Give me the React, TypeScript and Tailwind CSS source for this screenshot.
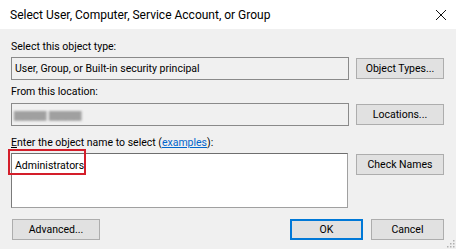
import React from "react";

const font = { fontFamily: 'Roboto, "Noto Sans", Arial, sans-serif' };

function Btn({ children, primary = false, className = "" }: { children: React.ReactNode; primary?: boolean; className?: string }) {
  return (
    <div
      className={`flex items-center justify-center bg-[#e1e1e1] text-[10.5px] text-black ${
        primary ? "border-2 border-[#0078d7]" : "border border-[#adadad]"
      } ${className}`}
    >
      {children}
    </div>
  );
}

export default function App() {
  return (
    <div className="relative w-[456px] h-[249px] overflow-hidden bg-[#f0f0f0] text-[10.5px] text-black" style={font}>
      {/* Title bar */}
      <div className="flex h-[29px] items-center justify-between bg-white pl-[10px] pr-[9px]">
        <span className="text-[12px] leading-none">Select User, Computer, Service Account, or Group</span>
        <svg width="12" height="12" viewBox="0 0 12 12">
          <path d="M1 1 L11 11 M11 1 L1 11" stroke="#111" strokeWidth="1" />
        </svg>
      </div>

      <div className="flex flex-col pl-[11px] pr-[12px]">
        <div className="mt-[10px] h-[16px] leading-[16px]">Select this object type:</div>
        <div className="mt-[2px] flex items-center gap-[7px]">
          <div className="flex h-[23px] w-[338px] items-center border border-[#8a8a8a] bg-[#f0f0f0] pl-[3px]">
            User, Group, or Built-in security principal
          </div>
          <Btn className="h-[21px] w-[88px]">Object Types...</Btn>
        </div>

        <div className="mt-[4px] h-[16px] leading-[16px]">From this location:</div>
        <div className="mt-[3px] flex items-center gap-[7px]">
          <div className="flex h-[23px] w-[338px] items-center border border-[#8a8a8a] bg-[#f0f0f0] pl-[2px]">
            <span className="text-[#a0a0a0] blur-[1px]">▆▆▆▆ ▆▆▆▆</span>
          </div>
          <Btn className="h-[21px] w-[88px]">Locations...</Btn>
        </div>

        <div className="mt-[9px] h-[16px] leading-[16px]">
          <span className="underline">E</span>nter the object name to select (
          <span className="text-[#0066cc] underline">examples</span>):
        </div>
        <div className="mt-[2px] flex items-start gap-[7px]">
          <div className="h-[55px] w-[337px] border border-[#a0a0a0] border-t-[#6e6e6e] border-l-[#7a7a7a] bg-white pl-[3px] pt-[2px]">
            <span className="leading-[16px]">Administrators</span>
            <span className="ml-[1px] inline-block h-[13px] w-[1px] translate-y-[2px] bg-black" />
          </div>
          <Btn className="ml-[1px] mt-[1px] h-[21px] w-[88px]">Check Names</Btn>
        </div>

        <div className="mt-[11px] flex items-center">
          <Btn className="ml-[1px] h-[21px] w-[88px]">Advanced...</Btn>
          <div className="flex-1" />
          <Btn primary className="h-[21px] w-[73px]">OK</Btn>
          <Btn className="ml-[8px] h-[21px] w-[73px]">Cancel</Btn>
        </div>
      </div>

      {/* Red annotation box */}
      <div className="absolute left-[8px] top-[149px] h-[26px] w-[78px] border-2 border-[#d41e2a]" />

      {/* Resize grip */}
      <svg className="absolute right-[1px] bottom-[1px]" width="10" height="10" viewBox="0 0 10 10">
        <rect x="8" y="2" width="1.5" height="1.5" fill="#b0b0b0" />
        <rect x="5" y="5" width="1.5" height="1.5" fill="#b0b0b0" />
        <rect x="8" y="5" width="1.5" height="1.5" fill="#b0b0b0" />
        <rect x="2" y="8" width="1.5" height="1.5" fill="#b0b0b0" />
        <rect x="5" y="8" width="1.5" height="1.5" fill="#b0b0b0" />
        <rect x="8" y="8" width="1.5" height="1.5" fill="#b0b0b0" />
      </svg>
    </div>
  );
}
